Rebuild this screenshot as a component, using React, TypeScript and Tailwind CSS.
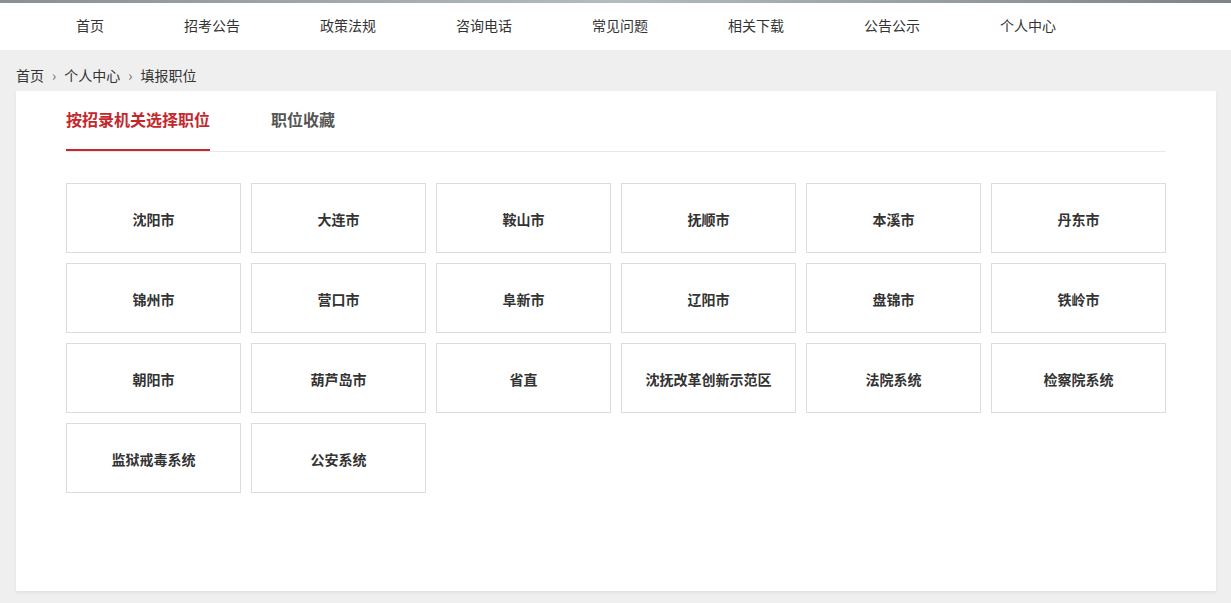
const navItems = [
  "首页",
  "招考公告",
  "政策法规",
  "咨询电话",
  "常见问题",
  "相关下载",
  "公告公示",
  "个人中心",
];

const units = [
  "沈阳市",
  "大连市",
  "鞍山市",
  "抚顺市",
  "本溪市",
  "丹东市",
  "锦州市",
  "营口市",
  "阜新市",
  "辽阳市",
  "盘锦市",
  "铁岭市",
  "朝阳市",
  "葫芦岛市",
  "省直",
  "沈抚改革创新示范区",
  "法院系统",
  "检察院系统",
  "监狱戒毒系统",
  "公安系统",
];

const font = {
  fontFamily: '"Microsoft YaHei", "Noto Sans CJK SC", sans-serif',
};

export default function App() {
  return (
    <div className="min-h-[603px] bg-[#efefef] text-[#333]" style={font}>
      <div className="h-[3px] bg-gradient-to-r from-[#8a8f93] via-[#b5bcc0] to-[#7d8387]" />
      <nav className="flex h-[47px] items-center bg-white pb-[3px] pl-[36px]">
        {navItems.map((item) => (
          <a key={item} className="px-10 text-[14px] leading-5 text-[#333]">
            {item}
          </a>
        ))}
      </nav>

      <div className="flex h-[41px] items-start pl-4 pt-[15px] text-[14px] leading-5">
        <span>首页</span>
        <span className="mx-[8px] text-[#666]">›</span>
        <span>个人中心</span>
        <span className="mx-[8px] text-[#666]">›</span>
        <span>填报职位</span>
      </div>

      <div className="mx-4 w-[1200px] bg-white px-[50px] pb-[98px] shadow-[0_2px_3px_rgba(0,0,0,0.06)]">
        <div className="flex border-b border-[#e8e8e8]">
          <div className="mr-[61px] flex h-[60px] items-center border-b-2 border-[#c4282d] pb-[2px] text-[16px] font-bold text-[#c4282d]">
            按招录机关选择职位
          </div>
          <div className="flex h-[60px] items-center pb-[4px] text-[16px] font-bold text-[#555]">
            职位收藏
          </div>
        </div>

        <div className="mt-[31px] grid grid-cols-6 gap-[10px]">
          {units.map((u) => (
            <div
              key={u}
              className="flex h-[70px] items-center justify-center border border-[#dcdcdc] pt-[2px] text-[14px] font-bold text-[#333]"
            >
              {u}
            </div>
          ))}
        </div>
      </div>
    </div>
  );
}
